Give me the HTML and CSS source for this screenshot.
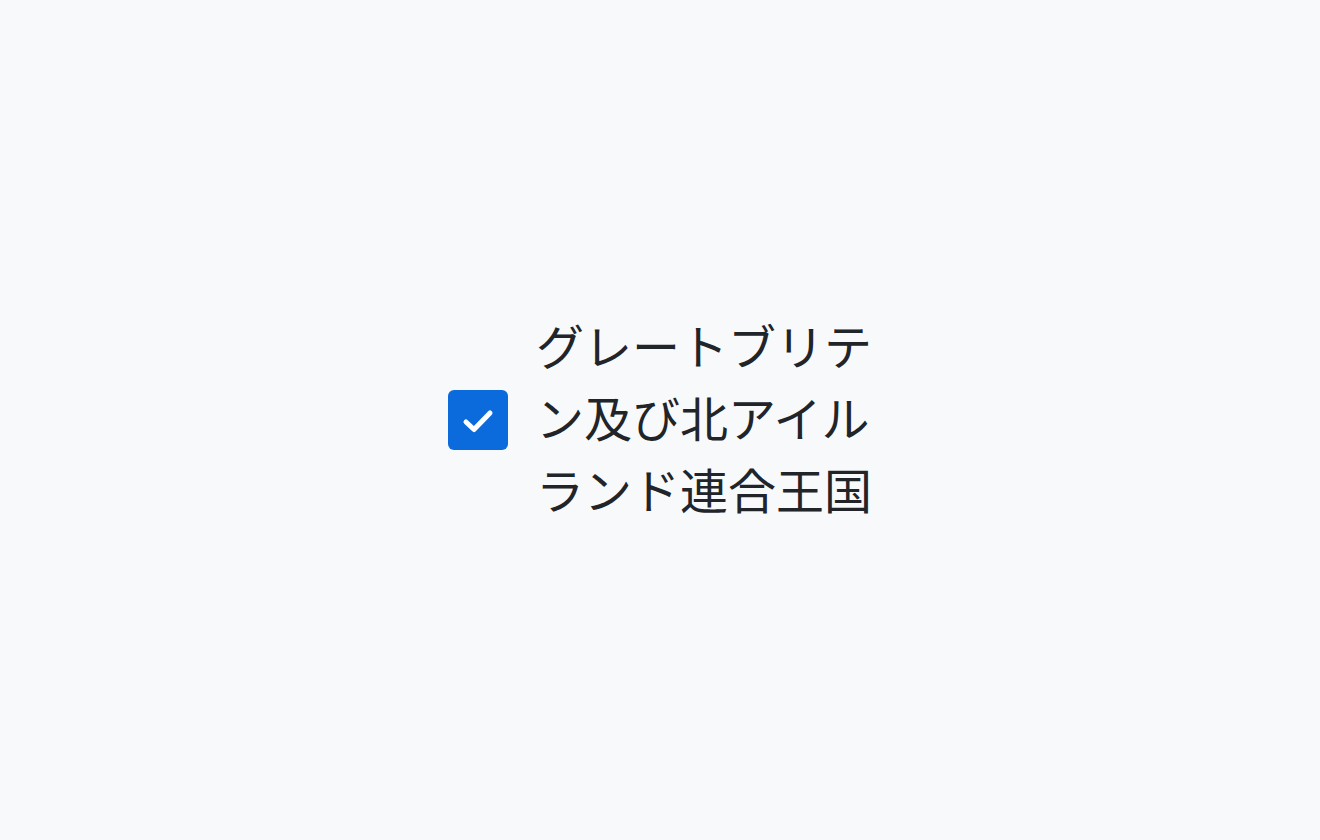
FILE: index.html
```html
<!DOCTYPE html>
<html lang="ja">
<head>
    <meta charset="UTF-8">
    <meta name="viewport" content="width=device-width, initial-scale=1.0">
    <title>Checkbox</title>
    <link rel="stylesheet" href="styles.css">
</head>
<body>
    <label class="check">
        <span class="box">
            <svg viewBox="0 0 60 60" width="60" height="60">
                <path d="M18 32 L26 39.5 L42 23" fill="none" stroke="#fff" stroke-width="5" stroke-linecap="round" stroke-linejoin="round"/>
            </svg>
        </span>
        <span class="label-text">グレートブリテン及び北アイルランド連合王国</span>
    </label>
</body>
</html>
```

FILE: styles.css
```css
* {
    margin: 0;
    padding: 0;
    box-sizing: border-box;
}

body {
    display: flex;
    justify-content: center;
    align-items: center;
    min-height: 100vh;
    background-color: #f8f9fa;
    color: #212529;
    font-family: "Noto Sans CJK JP", "Noto Sans", sans-serif;
}

.check {
    display: flex;
    align-items: center;
    gap: 28px;
}

.box {
    width: 60px;
    height: 60px;
    flex-shrink: 0;
    border-radius: 6px;
    background-color: #0b6bdc;
    display: flex;
}

.label-text {
    width: 336px;
    padding-bottom: 9px;
    font-size: 48px;
    line-height: 72px;
}
```
